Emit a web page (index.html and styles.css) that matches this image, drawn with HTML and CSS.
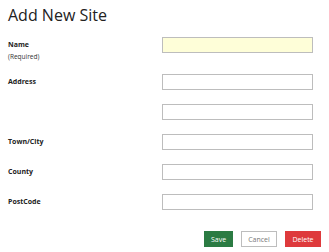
FILE: index.html
```html
<!DOCTYPE html>
<html lang="en">
<head>
  <meta charset="UTF-8">
  <meta name="viewport" content="width=device-width, initial-scale=1.0">
  <title>Add New Site</title>
  <link rel="stylesheet" href="styles.css">
</head>
<body>
  <div class="page">
    <h1 class="title">Add New Site</h1>
    <form class="site-form">
      <div class="row">
        <label class="label">Name<span class="hint">(Required)</span></label>
        <input type="text" class="field field-required">
      </div>
      <div class="row">
        <label class="label">Address</label>
        <input type="text" class="field">
      </div>
      <div class="row">
        <label class="label"></label>
        <input type="text" class="field">
      </div>
      <div class="row">
        <label class="label">Town/City</label>
        <input type="text" class="field">
      </div>
      <div class="row">
        <label class="label">County</label>
        <input type="text" class="field">
      </div>
      <div class="row">
        <label class="label">PostCode</label>
        <input type="text" class="field">
      </div>
      <div class="actions">
        <button type="submit" class="btn btn-save">Save</button>
        <button type="button" class="btn btn-cancel">Cancel</button>
        <button type="button" class="btn btn-delete">Delete</button>
      </div>
    </form>
  </div>
</body>
</html>
```
FILE: styles.css
```css
body {
  margin: 0;
  background-color: #ffffff;
  color: #222222;
  font-family: "Open Sans", "Liberation Sans", sans-serif;
}

.page {
  padding: 5px 8px 0 8px;
}

.title {
  font-size: 16px;
  font-weight: normal;
  line-height: 20px;
  margin: 0 0 12px 0;
}

.row {
  display: flex;
  align-items: flex-start;
  margin-bottom: 14px;
}

.label {
  width: 154px;
  font-size: 7px;
  font-weight: bold;
  line-height: 16px;
}

.hint {
  display: block;
  font-size: 6.5px;
  font-weight: normal;
  line-height: 7px;
  color: #333333;
}

.field {
  box-sizing: border-box;
  width: 151px;
  height: 16px;
  margin: 0;
  border: 1px solid #bdbdbd;
  background-color: #ffffff;
  padding: 0 3px;
}

.field-required {
  background-color: #fefed8;
}

.actions {
  display: flex;
  justify-content: flex-end;
  gap: 8px;
  padding-top: 7px;
  width: 313px;
}

.btn {
  box-sizing: border-box;
  height: 16px;
  padding: 0;
  font-family: "Open Sans", "Liberation Sans", sans-serif;
  font-size: 7px;
  border: 1px solid transparent;
  cursor: pointer;
}

.btn-save {
  width: 29px;
  background-color: #2b7b43;
  color: #ffffff;
}

.btn-cancel {
  width: 36px;
  background-color: #ffffff;
  border-color: #bdbdbd;
  color: #777777;
}

.btn-delete {
  width: 36px;
  background-color: #de3a3c;
  color: #ffffff;
}
```
